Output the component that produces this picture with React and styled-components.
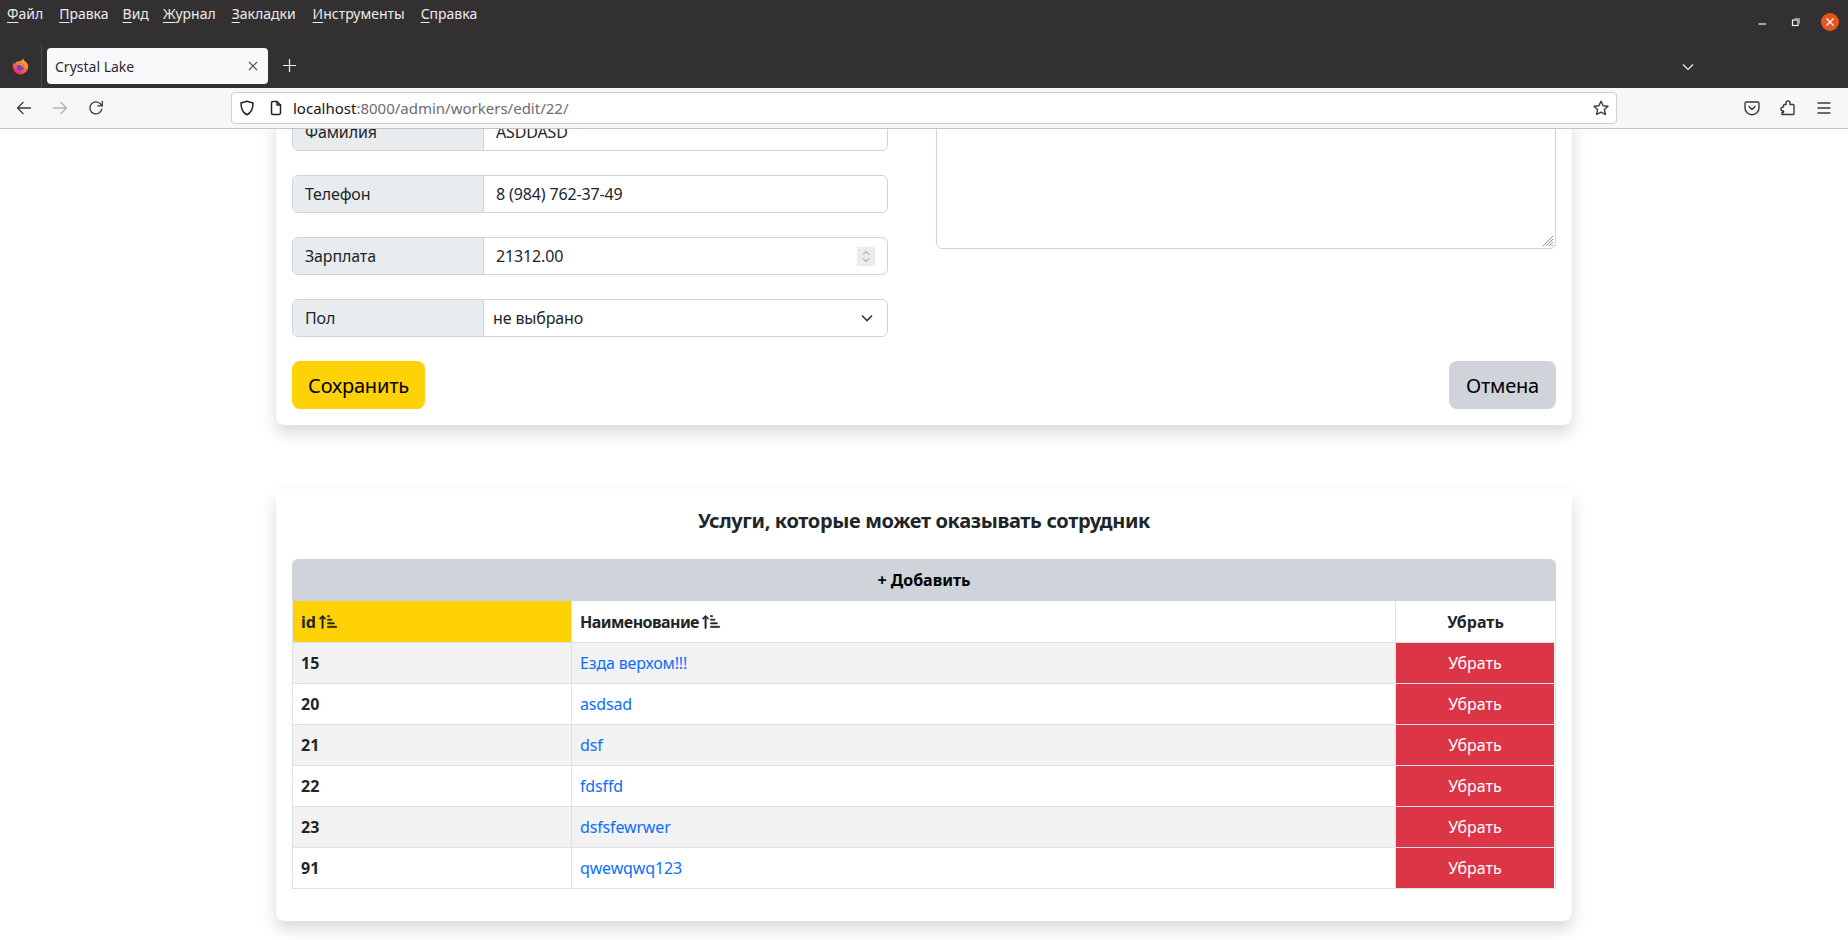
import React from 'react';
import styled, { createGlobalStyle } from 'styled-components';
import { BsSortUpAlt } from 'react-icons/bs';

const FONT = `'Noto Sans', 'Open Sans', sans-serif`;

const GlobalStyle = createGlobalStyle`
  html, body { margin: 0; padding: 0; height: 100%; overflow: hidden; background: #fff; }
  * { box-sizing: border-box; }
  body { font-family: ${FONT}; color: #212529; }
`;

const Screen = styled.div`
  height: 940px;
  display: flex;
  flex-direction: column;
  overflow: hidden;
`;

/* browser chrome */
const TitleBar = styled.div`
  flex: none;
  height: 88px;
  background: #323031;
  color: #f4f4f4;
  display: flex;
  flex-direction: column;
`;

const MenuRow = styled.div`
  height: 44px;
  display: flex;
  align-items: flex-start;
  padding: 4px 0 0 7px;
`;

const MenuItem = styled.span`
  font-size: 14px;
  line-height: 20px;
  margin-right: ${p => p.$gap}px;
  color: #ececec;
  u { text-underline-offset: 3px; text-decoration-thickness: 1px; }
`;

const WindowButtons = styled.div`
  margin-left: auto;
  display: flex;
  align-items: center;
  height: 44px;
  margin-top: -4px;
  padding-right: 9px;
  gap: 21px;
`;

const CloseCircle = styled.div`
  width: 18px;
  height: 18px;
  border-radius: 50%;
  background: #e95420;
  display: flex;
  align-items: center;
  justify-content: center;
`;

const TabRow = styled.div`
  height: 44px;
  display: flex;
  align-items: flex-start;
  position: relative;
`;

const LogoSlot = styled.div`
  width: 42px;
  height: 44px;
  border-right: 1px solid #4a4849;
  display: flex;
  align-items: center;
  justify-content: center;
  padding-top: 1px;
`;

const Tab = styled.div`
  width: 221px;
  height: 36px;
  margin: 4px 0 0 5px;
  background: #f9f9fb;
  border-radius: 4px;
  display: flex;
  align-items: center;
  padding: 0 10px 0 8px;
  color: #2b2a33;
  font-size: 14px;
  justify-content: space-between;
`;

const NewTab = styled.div`
  margin: 15px 0 0 15px;
  height: 16px;
  display: flex;
`;

const AllTabs = styled.div`
  margin: 17px 154px 0 auto;
  display: flex;
`;

const NavBar = styled.div`
  flex: none;
  height: 41px;
  background: #f7f7f7;
  border-bottom: 1px solid #c4c4c4;
  display: flex;
  align-items: center;
  position: relative;
  padding: 0 0 0 15px;
`;

const NavButtons = styled.div`
  display: flex;
  gap: 20px;
  width: 216px;
`;

const UrlBox = styled.div`
  width: 1386px;
  height: 32px;
  background: #fff;
  border: 1px solid #cfcfd8;
  border-radius: 4px;
  display: flex;
  align-items: center;
  padding: 0 6px 0 7px;
  font-size: 15px;
  color: #6c6c75;
`;

const UrlIcons = styled.div`
  display: flex;
  gap: 13px;
  margin-right: 9px;
`;

const Host = styled.span`
  color: #15141a;
`;

const StarSlot = styled.div`
  margin-left: auto;
  margin-right: 1px;
  display: flex;
`;

const ToolIcons = styled.div`
  display: flex;
  gap: 20px;
  margin-left: 127px;
`;

/* page, shown scrolled down */
const Viewport = styled.div`
  flex: 1;
  overflow: hidden;
`;

const Container = styled.div`
  width: 1296px;
  margin: -32px auto 0;
  display: flex;
  flex-direction: column;
  gap: 64px;
`;

const Card = styled.section`
  background: #fff;
  border-radius: 8px;
  box-shadow: 0 8px 16px rgba(0, 0, 0, 0.15);
  padding: 16px;
`;

const FormGrid = styled.div`
  display: grid;
  grid-template-columns: 596px 620px;
  justify-content: space-between;
`;

const FieldColumn = styled.div`
  display: flex;
  flex-direction: column;
  gap: 24px;
`;

const Field = styled.div`
  height: 38px;
  display: flex;
  border: 1px solid #ced4da;
  border-radius: 6px;
  overflow: hidden;
  font-size: 16px;
  letter-spacing: -0.14px;
`;

const FieldLabel = styled.div`
  width: 191px;
  flex: none;
  background: #e9ecef;
  border-right: 1px solid #ced4da;
  padding: 0 12px;
  display: flex;
  align-items: center;
`;

const FieldValue = styled.div`
  flex: 1;
  padding: 0 ${p => (p.$select ? 9 : 12)}px;
  display: flex;
  align-items: center;
  justify-content: space-between;
`;

const Stepper = styled.div`
  width: 18px;
  height: 19px;
  background: #e9ecef;
  display: flex;
  align-items: center;
  justify-content: center;
`;

const SelectArrow = styled.div`
  margin-right: 5px;
`;

const Note = styled.div`
  height: 136px;
  border: 1px solid #ced4da;
  border-radius: 6px;
  position: relative;
`;

const Grip = styled.svg`
  position: absolute;
  right: 1px;
  bottom: 1px;
`;

const Actions = styled.div`
  display: flex;
  justify-content: space-between;
  margin-top: 24px;
`;

const Button = styled.button`
  height: 48px;
  width: ${p => p.$w}px;
  border: 0;
  border-radius: 8px;
  font: 20px ${FONT};
  letter-spacing: -0.2px;
  color: #000;
  background: ${p => p.$bg};
  padding: 0;
`;

const Title = styled.h2`
  margin: 0 0 22px;
  font-size: 20px;
  line-height: 32px;
  font-weight: 700;
  letter-spacing: -0.35px;
  text-align: center;
`;

const AddRow = styled.div`
  height: 42px;
  background: #ced4da;
  border-radius: 6px 6px 0 0;
  display: flex;
  align-items: center;
  justify-content: center;
  font-size: 16px;
  font-weight: 700;
  color: #000;
`;

const Table = styled.table`
  width: 100%;
  border-collapse: collapse;
  table-layout: fixed;
  font-size: 16px;
  margin-bottom: 16px;
`;

const Th = styled.th`
  height: 41px;
  border: 1px solid #dee2e6;
  border-top: 0;
  padding: 2px 8px 0;
  text-align: ${p => (p.$center ? 'center' : 'left')};
  letter-spacing: ${p => (p.$tight ? '-0.55px' : '0')};
  background: ${p => (p.$active ? '#ffd207' : '#fff')};
`;

const SortIcon = styled(BsSortUpAlt)`
  vertical-align: -3px;
  margin-left: 3px;
  stroke: currentColor;
  stroke-width: 0.6px;
`;

const Tr = styled.tr`
  background: ${p => (p.$odd ? '#f2f2f2' : '#fff')};
`;

const Td = styled.td`
  height: 41px;
  border: 1px solid #dee2e6;
  padding: 0 8px;
  font-weight: ${p => (p.$bold ? 700 : 400)};
`;

const NameLink = styled.a`
  color: #0d6efd;
  text-decoration: none;
  letter-spacing: -0.15px;
`;

const RemoveCell = styled.td`
  height: 41px;
  border: 1px solid #dee2e6;
  padding: 0 1px 0 0;
`;

const RemoveButton = styled.div`
  height: 40px;
  background: #dc3545;
  color: #fff;
  display: flex;
  align-items: center;
  justify-content: center;
`;

/* icons */
const stroke = { fill: 'none', stroke: '#3a3a40', strokeWidth: 1.6, strokeLinecap: 'round', strokeLinejoin: 'round' };

const FirefoxLogo = () => (
  <svg width="17" height="17" viewBox="0 0 17 17">
    <defs>
      <linearGradient id="ff" x1="0.8" y1="0" x2="0.2" y2="1">
        <stop offset="0" stopColor="#ffc11f" />
        <stop offset="0.5" stopColor="#ff7139" />
        <stop offset="1" stopColor="#e31587" />
      </linearGradient>
    </defs>
    <path d="M11 .6c.3 1.6 1.2 2 2.6 3.2C15.500 5.400 16.200 7 16.200 9a7.700 7.700 0 1 1-15.400-.6c0-1.500.5-2.900 1.200-3.900 0 .8.3 1.300.8 1.600C3.300 4.400 4.800 3.600 6 3.600 8.300 3.400 10.400 2.600 11 .6z" fill="url(#ff)" />
    <circle cx="8.400" cy="9" r="3.700" fill="#7a3fd0" />
    <path d="M4.500 7.500c1.500-.8 3-.8 4.200-.4 1.500.5 2.300 2 1.800 3.500 1.400-.8 1.500-3 .3-4.300C9.400 5 6 5.300 4.500 7.500z" fill="#ff980e" />
  </svg>
);

const Back = ({ color = '#3a3a40' }) => (
  <svg width="16" height="16" viewBox="0 0 16 16" style={{ display: 'block' }}>
    <path d="M15.500 8H2.500M8 2.500 2.500 8 8 13.500" {...stroke} stroke={color} strokeWidth="1.300" />
  </svg>
);

const Forward = ({ color = '#b4b4b8' }) => (
  <svg width="16" height="16" viewBox="0 0 16 16" style={{ display: 'block' }}>
    <path d="M2.500 8h13M10 2.500 15.500 8 10 13.500" {...stroke} stroke={color} strokeWidth="1.300" />
  </svg>
);

const Reload = () => (
  <svg width="16" height="16" viewBox="-1 0 16 16" style={{ display: 'block' }}>
    <path d="M13.800 9.200A6 6 0 1 1 12 3.500L14 5.500" {...stroke} strokeWidth="1.300" />
    <path d="M14.300 1.300v4.500H9.800" {...stroke} strokeWidth="1.300" />
  </svg>
);

const Shield = () => (
  <svg width="16" height="16" viewBox="0 0 16 16" style={{ display: 'block' }}>
    <path d="M8 1.300 14 3c0 6-1.500 9.700-6 11.700C3.500 12.700 2 9 2 3z" {...stroke} stroke="#222" strokeWidth="1.500" />
  </svg>
);

const PageIcon = () => (
  <svg width="16" height="16" viewBox="0 0 16 16" style={{ display: 'block' }}>
    <path d="M3.500 3A1.500 1.500 0 0 1 5 1.500h4L12.500 5v8a1.500 1.500 0 0 1-1.500 1.500H5A1.500 1.500 0 0 1 3.500 13z" {...stroke} stroke="#222" strokeWidth="1.500" />
    <path d="M9 1.500V5h3.500" {...stroke} stroke="#222" strokeWidth="1.500" />
  </svg>
);

const Star = () => (
  <svg width="16" height="16" viewBox="0 0 16 16" style={{ display: 'block' }}>
    <path d="m8 1.200 2.100 4.500 4.900.6-3.600 3.300 1 4.900L8 12.100l-4.400 2.400 1-4.900L1 6.300l4.900-.6z" {...stroke} strokeWidth="1.400" />
  </svg>
);

const Pocket = () => (
  <svg width="16" height="16" viewBox="0 0 16 16" style={{ display: 'block' }}>
    <path d="M2.500 2h11A1.500 1.500 0 0 1 15 3.500V8a7 6.700 0 0 1-14 0V3.500A1.500 1.500 0 0 1 2.500 2z" {...stroke} strokeWidth="1.400" />
    <path d="M5 6.500 8 9.500l3-3" {...stroke} strokeWidth="1.400" />
  </svg>
);

const Puzzle = () => (
  <svg width="16" height="16" viewBox="0 0 16 16" style={{ display: 'block' }}>
    <path d="M2 14.500h11a1 1 0 0 0 1-1V5.500a1 1 0 0 0-1-1H10V3a2 2 0 0 0-4 0v1.500H4.500a1 1 0 0 0-1 1V7H3a2 2 0 0 0 0 4h.5v1.500H2z" {...stroke} strokeWidth="1.400" />
  </svg>
);

const Burger = () => (
  <svg width="16" height="16" viewBox="0 0 16 16" style={{ display: 'block' }}>
    <path d="M2 3h12M2 8h12M2 13h12" {...stroke} strokeWidth="1.400" />
  </svg>
);

const Chevron = ({ size = 12, color = '#f0f0f0', width = 1.2 }) => (
  <svg width={size} height={size} viewBox="0 0 12 12" style={{ display: 'block' }}>
    <path d="M1 3.500 6 8.500l5-5" fill="none" stroke={color} strokeWidth={width} />
  </svg>
);

const menu = [
  ['Ф', 'айл', 16],
  ['П', 'равка', 14],
  ['В', 'ид', 14],
  ['Ж', 'урнал', 16],
  ['З', 'акладки', 17],
  ['И', 'нструменты', 16],
  ['С', 'правка', 0],
];

const services = [
  [15, 'Езда верхом!!!'],
  [20, 'asdsad'],
  [21, 'dsf'],
  [22, 'fdsffd'],
  [23, 'dsfsfewrwer'],
  [91, 'qwewqwq123'],
];

const App = () => (
  <Screen>
    <GlobalStyle />
    <TitleBar>
      <MenuRow>
        {menu.map(([first, rest, gap]) => (
          <MenuItem key={first + rest} $gap={gap}><u>{first}</u>{rest}</MenuItem>
        ))}
        <WindowButtons>
          <svg width="12" height="12" viewBox="0 0 12 12"><path d="M3.500 8H11" stroke="#f4f4f4" strokeWidth="1.200" /></svg>
          <svg width="12" height="12" viewBox="0 0 12 12">
            <rect x="4.500" y="4" width="5.500" height="5.500" fill="none" stroke="#f4f4f4" strokeWidth="1.200" />
            <path d="M6.500 2.500h5v5" fill="none" stroke="#9c9c9c" strokeWidth="1" />
          </svg>
          <CloseCircle>
            <svg width="10" height="10" viewBox="0 0 10 10"><path d="M1.500 1.500l7 7M8.500 1.500l-7 7" stroke="#fff" strokeWidth="1.300" /></svg>
          </CloseCircle>
        </WindowButtons>
      </MenuRow>
      <TabRow>
        <LogoSlot><FirefoxLogo /></LogoSlot>
        <Tab>
          Crystal Lake
          <svg width="10" height="10" viewBox="0 0 10 10"><path d="M1 1l8 8M9 1l-8 8" stroke="#4a4a4f" strokeWidth="1.100" /></svg>
        </Tab>
        <NewTab>
          <svg width="13" height="13" viewBox="0 0 13 13"><path d="M6.500 0v13M0 6.500h13" stroke="#eee" strokeWidth="1.200" /></svg>
        </NewTab>
        <AllTabs><Chevron /></AllTabs>
      </TabRow>
    </TitleBar>
    <NavBar>
      <NavButtons>
        <Back />
        <Forward />
        <Reload />
      </NavButtons>
      <UrlBox>
        <UrlIcons><Shield /><PageIcon /></UrlIcons>
        <Host>localhost</Host>:8000/admin/workers/edit/22/
        <StarSlot><Star /></StarSlot>
      </UrlBox>
      <ToolIcons>
        <Pocket />
        <Puzzle />
        <Burger />
      </ToolIcons>
    </NavBar>
    <Viewport>
      <Container>
        <Card>
          <FormGrid>
            <FieldColumn>
              <Field><FieldLabel>Фамилия</FieldLabel><FieldValue>ASDDASD</FieldValue></Field>
              <Field><FieldLabel>Телефон</FieldLabel><FieldValue>8 (984) 762-37-49</FieldValue></Field>
              <Field>
                <FieldLabel>Зарплата</FieldLabel>
                <FieldValue>
                  21312.00
                  <Stepper>
                    <svg width="10" height="15" viewBox="0 0 10 15">
                      <path d="M2 5.500 5 2.500l3 3M2 9.500l3 3 3-3" fill="none" stroke="#8a8f94" strokeWidth="1" />
                    </svg>
                  </Stepper>
                </FieldValue>
              </Field>
              <Field>
                <FieldLabel>Пол</FieldLabel>
                <FieldValue $select>
                  не выбрано
                  <SelectArrow><Chevron color="#343a40" width={1.600} /></SelectArrow>
                </FieldValue>
              </Field>
            </FieldColumn>
            <Note>
              <Grip width="12" height="12" viewBox="0 0 12 12">
                <path d="M11 1 1 11M11 4 4 11M11 7 7 11M11 9.500 9.500 11" stroke="#8f8f8f" strokeWidth="1" />
              </Grip>
            </Note>
          </FormGrid>
          <Actions>
            <Button $w={133} $bg="#ffd207">Сохранить</Button>
            <Button $w={107} $bg="#ced4da">Отмена</Button>
          </Actions>
        </Card>
        <Card>
          <Title>Услуги, которые может оказывать сотрудник</Title>
          <AddRow>+ Добавить</AddRow>
          <Table>
            <colgroup>
              <col style={{ width: 279 }} />
              <col />
              <col style={{ width: 160 }} />
            </colgroup>
            <thead>
              <tr>
                <Th $active>id<SortIcon size={19} /></Th>
                <Th $tight>Наименование<SortIcon size={19} /></Th>
                <Th $center>Убрать</Th>
              </tr>
            </thead>
            <tbody>
              {services.map(([id, name], i) => (
                <Tr key={id} $odd={i % 2 === 0}>
                  <Td $bold>{id}</Td>
                  <Td><NameLink href="#">{name}</NameLink></Td>
                  <RemoveCell><RemoveButton>Убрать</RemoveButton></RemoveCell>
                </Tr>
              ))}
            </tbody>
          </Table>
        </Card>
      </Container>
    </Viewport>
  </Screen>
);

export default App;
